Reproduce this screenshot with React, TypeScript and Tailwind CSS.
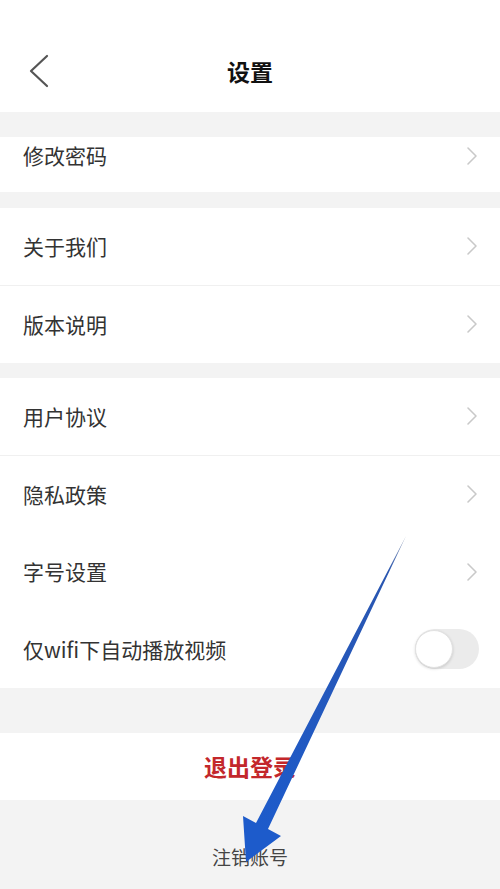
const FONT = { fontFamily: '"Noto Sans CJK SC", "Noto Sans", sans-serif' };

function Chevron() {
  return (
    <svg width="14" height="20" viewBox="0 0 14 20" fill="none" className="shrink-0">
      <path d="M3 2l8 8-8 8" stroke="#c9c9c9" strokeWidth="1.6" strokeLinecap="round" strokeLinejoin="round" />
    </svg>
  );
}

function Row({ label, divider = true, right }: { label: string; divider?: boolean; right?: React.ReactNode }) {
  return (
    <div className={`h-[77.5px] flex items-center justify-between pl-[23px] pr-[21px] bg-white ${divider ? 'border-b border-[#f0f0f0]' : ''}`}>
      <span className="text-[21px] text-[#333]">{label}</span>
      {right ?? <Chevron />}
    </div>
  );
}

function Toggle() {
  return (
    <div className="w-[64px] h-[40px] rounded-full bg-[#ebebeb] flex items-center">
      <div className="w-[38px] h-[38px] rounded-full bg-white border border-[#e2e2e2] shadow-[0_1px_3px_rgba(0,0,0,0.15)]" />
    </div>
  );
}

export default function App() {
  return (
    <div className="relative w-[500px] h-[889px] overflow-hidden bg-[#f3f3f3]" style={FONT}>
      {/* header */}
      <div className="h-[112px] bg-white flex items-end pb-[23px] relative">
        <div className="w-full flex items-center justify-center h-[36px] relative">
          <svg width="24" height="34" viewBox="0 0 24 34" fill="none" className="absolute left-[27px]">
            <path d="M20 2L4 17l16 15" stroke="#555" strokeWidth="2.2" strokeLinecap="round" strokeLinejoin="round" />
          </svg>
          <span className="text-[23px] font-bold text-[#111]">设置</span>
        </div>
      </div>

      <div className="h-[25px]" />
      <div className="h-[55px] bg-white flex items-center justify-between pl-[23px] pr-[21px] pb-[17px]">
        <span className="text-[21px] text-[#333]">修改密码</span>
        <Chevron />
      </div>

      <div className="h-[16px]" />
      <Row label="关于我们" />
      <Row label="版本说明" divider={false} />

      <div className="h-[15px]" />
      <Row label="用户协议" />
      <Row label="隐私政策" divider={false} />
      <Row label="字号设置" divider={false} />
      <Row label="仅wifi下自动播放视频" divider={false} right={<Toggle />} />

      <div className="h-[45px]" />
      <div className="h-[67px] bg-white flex items-center justify-center">
        <span className="text-[23px] font-bold text-[#c3272b]">退出登录</span>
      </div>

      <div className="h-[89px] flex items-center justify-center pt-[25px]">
        <span className="text-[19px] text-[#444]">注销账号</span>
      </div>

      {/* annotation arrow */}
      <svg className="absolute inset-0 pointer-events-none" width="500" height="889" viewBox="0 0 500 889">
        <defs>
          <linearGradient id="shaft" x1="406" y1="536" x2="260" y2="830" gradientUnits="userSpaceOnUse">
            <stop offset="0" stopColor="#9aa4b8" />
            <stop offset="0.12" stopColor="#2a56b0" />
            <stop offset="1" stopColor="#1d5bcb" />
          </linearGradient>
        </defs>
        <polygon points="406,536 268,829 281,836 246,862 243,816 256,823" fill="url(#shaft)" />
      </svg>
    </div>
  );
}
